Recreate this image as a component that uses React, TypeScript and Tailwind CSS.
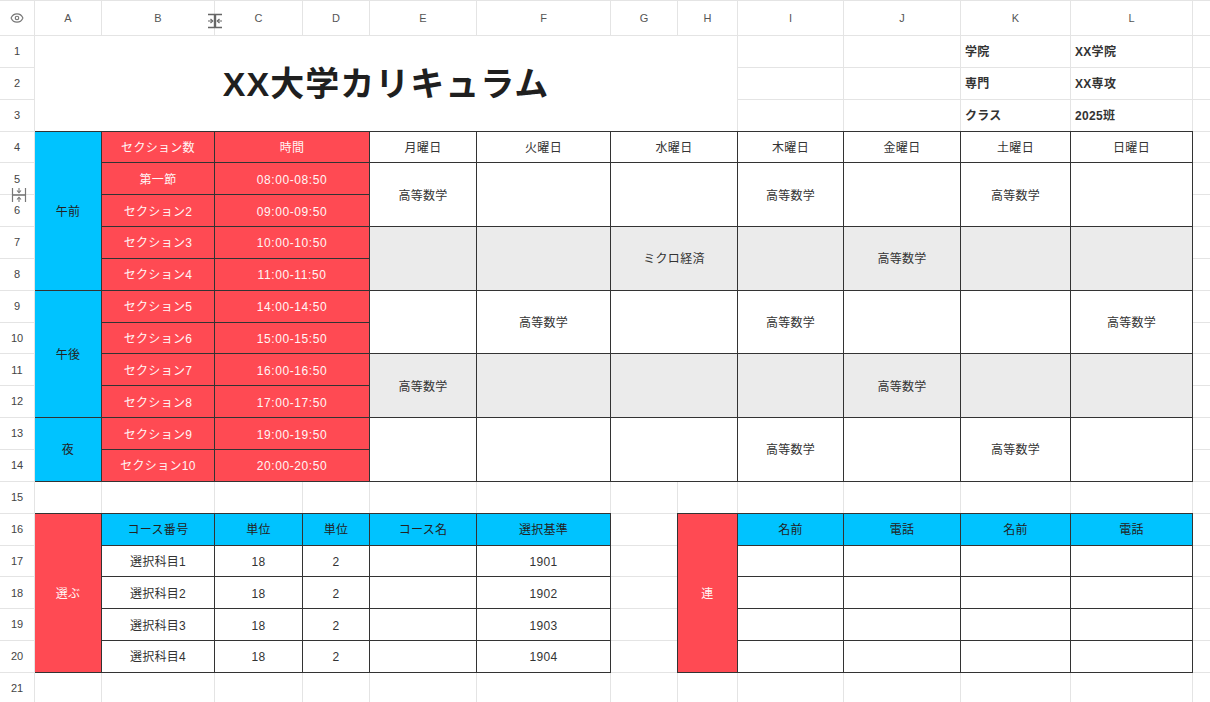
import { Eye } from "lucide-react";

// literal class lookups so Tailwind sees every name
const COL_START: Record<number, string> = {
  1: "col-start-1",
  2: "col-start-2",
  3: "col-start-3",
  4: "col-start-4",
  5: "col-start-5",
  6: "col-start-6",
  7: "col-start-7",
  8: "col-start-8",
  9: "col-start-9",
  10: "col-start-10",
  11: "col-start-11",
  12: "col-start-12",
  13: "col-start-13",
  14: "col-start-14",
};
const COL_SPAN: Record<number, string> = {
  1: "col-span-1",
  2: "col-span-2",
  8: "col-span-8",
};
const ROW_START: Record<number, string> = {
  1: "row-start-1",
  2: "row-start-2",
  3: "row-start-3",
  4: "row-start-4",
  5: "row-start-5",
  6: "row-start-6",
  7: "row-start-7",
  8: "row-start-8",
  9: "row-start-9",
  10: "row-start-10",
  11: "row-start-11",
  12: "row-start-12",
  13: "row-start-13",
  14: "row-start-14",
  15: "row-start-15",
  16: "row-start-16",
  17: "row-start-17",
  18: "row-start-18",
  19: "row-start-19",
  20: "row-start-20",
  21: "row-start-21",
  22: "row-start-22",
};
const ROW_SPAN: Record<number, string> = {
  1: "row-span-1",
  2: "row-span-2",
  3: "row-span-3",
  4: "row-span-4",
  5: "row-span-5",
};

const PLAIN = "border-[#e4e4e4]";
const TITLE = `${PLAIN} text-[34px] font-bold text-[#1f1f1f] tracking-[1px]`;
const INFO = `${PLAIN} justify-start pl-1 font-bold text-[#333]`;
const CYAN = "bg-[#00c3ff] border-[#333] text-[#222]";
const RED = "bg-[#ff4a53] border-[#333] text-[#fff5f5]";
const WHITE = "bg-white border-[#333] text-[#333]";
const GRAY = "bg-[#ebebeb] border-[#333] text-[#333]";
const TOP = "-mt-px border-t";
const LEFT = "-ml-px border-l";

type CellDef = {
  c: number;
  r: number;
  cs?: number;
  rs?: number;
  cls: string;
  text?: string;
};

const LETTERS = ["A", "B", "C", "D", "E", "F", "G", "H", "I", "J", "K", "L"];

const SECTIONS = [
  ["第一節", "08:00-08:50"],
  ["セクション2", "09:00-09:50"],
  ["セクション3", "10:00-10:50"],
  ["セクション4", "11:00-11:50"],
  ["セクション5", "14:00-14:50"],
  ["セクション6", "15:00-15:50"],
  ["セクション7", "16:00-16:50"],
  ["セクション8", "17:00-17:50"],
  ["セクション9", "19:00-19:50"],
  ["セクション10", "20:00-20:50"],
];

const DAYS = [
  { c: 6, cs: 1, label: "月曜日" },
  { c: 7, cs: 1, label: "火曜日" },
  { c: 8, cs: 2, label: "水曜日" },
  { c: 10, cs: 1, label: "木曜日" },
  { c: 11, cs: 1, label: "金曜日" },
  { c: 12, cs: 1, label: "土曜日" },
  { c: 13, cs: 1, label: "日曜日" },
];

const SLOTS = [
  ["高等数学", "", "", "高等数学", "", "高等数学", ""],
  ["", "", "ミクロ経済", "", "高等数学", "", ""],
  ["", "高等数学", "", "高等数学", "", "", "高等数学"],
  ["高等数学", "", "", "", "高等数学", "", ""],
  ["", "", "", "高等数学", "", "高等数学", ""],
];

function buildCells(): CellDef[] {
  const cells: CellDef[] = [];
  // title + info block
  cells.push({ c: 2, r: 2, cs: 8, rs: 3, cls: TITLE, text: "XX大学カリキュラム" });
  const info = [
    ["学院", "XX学院"],
    ["専門", "XX専攻"],
    ["クラス", "2025班"],
  ];
  info.forEach(([k, v], i) => {
    cells.push({ c: 12, r: 2 + i, cls: INFO, text: k });
    cells.push({ c: 13, r: 2 + i, cls: INFO, text: v });
  });

  // timetable
  cells.push({ c: 2, r: 5, rs: 5, cls: `${CYAN} ${TOP}`, text: "午前" });
  cells.push({ c: 2, r: 10, rs: 4, cls: CYAN, text: "午後" });
  cells.push({ c: 2, r: 14, rs: 2, cls: CYAN, text: "夜" });
  cells.push({ c: 3, r: 5, cls: `${RED} ${TOP}`, text: "セクション数" });
  cells.push({ c: 4, r: 5, cs: 2, cls: `${RED} ${TOP}`, text: "時間" });
  SECTIONS.forEach(([name, time], i) => {
    cells.push({ c: 3, r: 6 + i, cls: RED, text: name });
    cells.push({ c: 4, r: 6 + i, cs: 2, cls: `${RED} tracking-[0.6px]`, text: time });
  });
  DAYS.forEach((d) => {
    cells.push({ c: d.c, r: 5, cs: d.cs, cls: `${WHITE} ${TOP}`, text: d.label });
  });
  SLOTS.forEach((slot, si) => {
    DAYS.forEach((d, di) => {
      cells.push({
        c: d.c,
        r: 6 + si * 2,
        cs: d.cs,
        rs: 2,
        cls: si % 2 === 1 ? GRAY : WHITE,
        text: slot[di],
      });
    });
  });

  // elective courses
  cells.push({ c: 2, r: 17, rs: 5, cls: `${RED} ${TOP}`, text: "選ぶ" });
  ["コース番号", "単位", "単位", "コース名", "選択基準"].forEach((t, i) => {
    cells.push({ c: 3 + i, r: 17, cls: `${CYAN} ${TOP}`, text: t });
  });
  for (let i = 0; i < 4; i++) {
    const row = [`選択科目${i + 1}`, "18", "2", "", `${1901 + i}`];
    row.forEach((t, j) => {
      cells.push({ c: 3 + j, r: 18 + i, cls: WHITE, text: t });
    });
  }

  // contacts
  cells.push({ c: 9, r: 17, rs: 5, cls: `${RED} ${TOP} ${LEFT}`, text: "連" });
  ["名前", "電話", "名前", "電話"].forEach((t, i) => {
    cells.push({ c: 10 + i, r: 17, cls: `${CYAN} ${TOP}`, text: t });
  });
  for (let i = 0; i < 4; i++) {
    for (let j = 0; j < 4; j++) {
      cells.push({ c: 10 + j, r: 18 + i, cls: WHITE });
    }
  }
  return cells;
}

function ColResizeCursor() {
  return (
    <svg
      width="16"
      height="16"
      viewBox="0 0 16 16"
      className="absolute left-[207px] top-[13px]"
      fill="none"
      stroke="#666"
    >
      <path d="M1 1.5h14M1 14.5h14" strokeWidth="1.4" />
      <path d="M8 1.5v13" strokeWidth="2.4" />
      <path d="M1 8h4.5M10.5 8H15" strokeWidth="1.2" />
      <path d="M3.5 6l2.2 2-2.2 2M12.5 6l-2.2 2 2.2 2" strokeWidth="1.2" />
    </svg>
  );
}

function RowResizeCursor() {
  return (
    <svg
      width="16"
      height="16"
      viewBox="0 0 16 16"
      className="absolute left-[11px] top-[187px]"
      fill="none"
      stroke="#777"
    >
      <path d="M1.5 1v14M14.5 1v14" strokeWidth="1.2" />
      <path d="M1.5 8h13" strokeWidth="1.6" />
      <path d="M8 1v4.5M8 10.5V15" strokeWidth="1.1" />
      <path d="M6 3.5l2 2.2 2-2.2M6 12.5l2-2.2 2 2.2" strokeWidth="1.1" />
    </svg>
  );
}

export default function App() {
  const cells = buildCells();
  const isCovered = (c: number, r: number) =>
    cells.some(
      (cell) =>
        c >= cell.c &&
        c < cell.c + (cell.cs ?? 1) &&
        r >= cell.r &&
        r < cell.r + (cell.rs ?? 1)
    );

  const plain: { c: number; r: number }[] = [];
  for (let r = 2; r <= 22; r++)
    for (let c = 2; c <= 14; c++) if (!isCovered(c, r)) plain.push({ c, r });

  const base =
    "flex items-center justify-center pt-[2px] border-r border-b text-[12px] leading-[14px] tracking-[0.3px] whitespace-nowrap overflow-hidden";

  return (
    <div
      className="relative h-[702px] w-[1210px] overflow-hidden bg-white"
      style={{ fontFamily: '"Liberation Sans", "Noto Sans CJK JP", sans-serif' }}
    >
      <div className="grid grid-cols-[35px_67px_113px_88px_67px_107px_134px_67px_60px_106px_117px_110px_122px_1fr] grid-rows-[36px_repeat(21,31.85px)]">
        {/* corner */}
        <div className="col-start-1 row-start-1 flex items-center justify-center border-t border-r border-b border-[#e4e4e4] text-[#777]">
          <Eye size={14} strokeWidth={2} />
        </div>
        {/* column headers */}
        {LETTERS.map((l, i) => (
          <div
            key={l}
            className={`${COL_START[i + 2]} row-start-1 flex items-center justify-center border-t border-r border-b border-[#e4e4e4] text-[11px] text-[#555]`}
          >
            {l}
          </div>
        ))}
        <div className="col-start-14 row-start-1 border-t border-b border-[#e4e4e4]" />
        {/* row headers */}
        {Array.from({ length: 21 }, (_, i) => (
          <div
            key={i}
            className={`col-start-1 ${ROW_START[i + 2]} flex items-center justify-center border-r border-b border-[#e4e4e4] text-[11px] text-[#444]`}
          >
            {i + 1}
          </div>
        ))}
        {/* empty cells */}
        {plain.map((p) => (
          <div
            key={`p-${p.c}-${p.r}`}
            className={`${COL_START[p.c]} ${ROW_START[p.r]} ${p.c === 14 ? "border-b" : "border-r border-b"} border-[#e4e4e4]`}
          />
        ))}
        {/* content cells */}
        {cells.map((cell, i) => (
          <div
            key={i}
            className={`${COL_START[cell.c]} ${COL_SPAN[cell.cs ?? 1]} ${ROW_START[cell.r]} ${ROW_SPAN[cell.rs ?? 1]} ${base} ${cell.cls}`}
          >
            {cell.text}
          </div>
        ))}
      </div>
      <ColResizeCursor />
      <RowResizeCursor />
    </div>
  );
}
